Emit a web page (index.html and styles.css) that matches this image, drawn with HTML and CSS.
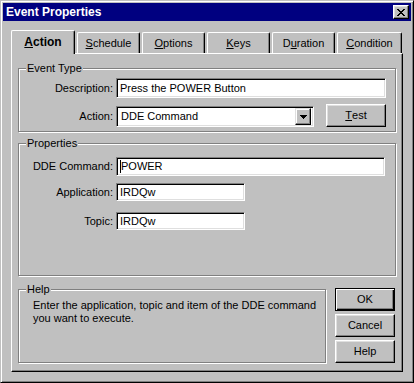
FILE: index.html
```html
<!DOCTYPE html>
<html>
<head>
<meta charset="utf-8">
<link rel="stylesheet" href="styles.css">
</head>
<body>
<div class="window">
  <div class="titlebar">
    <span class="title">Event Properties</span>
    <span class="close">
      <svg width="8" height="7" viewBox="0 0 8 7" shape-rendering="crispEdges"><path d="M0 0h2v1H0zM6 0h2v1H6zM1 1h2v1H1zM5 1h2v1H5zM2 2h4v1H2zM3 3h2v1H3zM2 4h4v1H2zM1 5h2v1H1zM5 5h2v1H5zM0 6h2v1H0zM6 6h2v1H6z" fill="#000"/></svg>
    </span>
  </div>
  <div class="tabs">
    <div class="tab active"><u>A</u>ction</div>
    <div class="tab"><u>S</u>chedule</div>
    <div class="tab"><u>O</u>ptions</div>
    <div class="tab"><u>K</u>eys</div>
    <div class="tab">D<u>u</u>ration</div>
    <div class="tab wide"><u>C</u>ondition</div>
  </div>
  <div class="panel">
    <div class="group g-event">
      <span class="legend">Event Type</span>
      <div class="row">
        <span class="label">Description:</span>
        <div class="field f-desc">Press the POWER Button</div>
      </div>
      <div class="row row2">
        <span class="label">Action:</span>
        <div class="field combo">
          <span class="combo-text">DDE Command</span>
          <span class="drop"><svg width="7" height="4" viewBox="0 0 7 4" shape-rendering="crispEdges"><path d="M0 0h7v1H0zM1 1h5v1H1zM2 2h3v1H2zM3 3h1v1H3z" fill="#000"/></svg></span>
        </div>
        <div class="btn test"><u>T</u>est</div>
      </div>
    </div>
    <div class="group g-props">
      <span class="legend">Properties</span>
      <div class="row">
        <span class="label">DDE Command:</span>
        <div class="field f-dde"><span class="caret"></span>POWER</div>
      </div>
      <div class="row r-app">
        <span class="label">Application:</span>
        <div class="field f-short">IRDQw</div>
      </div>
      <div class="row r-topic">
        <span class="label">Topic:</span>
        <div class="field f-short">IRDQw</div>
      </div>
    </div>
    <div class="bottom">
      <div class="group g-help">
        <span class="legend">Help</span>
        <p class="helptext">Enter the application, topic and item of the DDE command you want to execute.</p>
      </div>
      <div class="buttons">
        <div class="btn default">OK</div>
        <div class="btn">Cancel</div>
        <div class="btn">Help</div>
      </div>
    </div>
  </div>
</div>
</body>
</html>
```
FILE: styles.css
```css
* { box-sizing: border-box; }
html, body { margin: 0; padding: 0; background: #c0c0c0; }
body {
  font-family: "Liberation Sans", Arial, sans-serif;
  font-size: 11px;
  color: #000;
}
.window {
  width: 414px;
  height: 383px;
  background: #c0c0c0;
  border: 1px solid;
  border-color: #c0c0c0 #000 #000 #c0c0c0;
  box-shadow: inset 1px 1px #fff, inset -1px -1px #808080;
  padding: 2px;
}
.titlebar {
  height: 18px;
  background: #000080;
  color: #fff;
  display: flex;
  align-items: center;
  justify-content: space-between;
  padding: 0 2px 0 3px;
}
.title { font-weight: bold; font-size: 12px; line-height: 14px; }
.close {
  width: 16px;
  height: 14px;
  background: #c0c0c0;
  border: 1px solid;
  border-color: #fff #000 #000 #fff;
  box-shadow: inset -1px -1px #808080, inset 1px 1px #dfdfdf;
  display: flex;
  align-items: center;
  justify-content: center;
}
.close svg { display: block; }
.tabs {
  display: flex;
  align-items: flex-end;
  gap: 2px;
  margin: 9px 0 0 8px;
  height: 23px;
}
.tab {
  width: 63px;
  height: 21px;
  border-top: 1px solid #fff;
  border-left: 1px solid #fff;
  border-right: 1px solid #000;
  border-radius: 2px 2px 0 0;
  box-shadow: inset -1px 0 #808080;
  display: flex;
  align-items: center;
  justify-content: center;
  line-height: 13px;
  padding-top: 1px;
}
.tab.active {
  width: 64px;
  height: 24px;
  margin-bottom: -1px;
  position: relative;
  z-index: 1;
  background: #c0c0c0;
  font-weight: bold;
  font-size: 12px;
  padding-top: 0;
}
.tab.wide { width: 65px; }
.panel {
  width: 392px;
  height: 319px;
  margin-left: 8px;
  border-top: 1px solid #fff;
  border-left: 1px solid #fff;
  border-right: 1px solid #000;
  border-bottom: 1px solid #000;
  box-shadow: inset -1px -1px #808080;
  padding: 14px 0 0 6px;
}
.group {
  position: relative;
  border: 1px solid #808080;
  box-shadow: inset 1px 1px #fff, 1px 1px #fff;
}
.legend {
  position: absolute;
  top: -7px;
  left: 7px;
  padding: 0 1px;
  background: #c0c0c0;
  line-height: 13px;
}
.g-event { width: 378px; height: 64px; padding-top: 9px; }
.g-props { width: 378px; height: 133px; margin-top: 11px; padding-top: 13px; }
.row { display: flex; align-items: center; }
.row2 { margin-top: 6px; align-items: flex-end; }
.row2 .label { align-self: center; padding-top: 2px; }
.label {
  width: 94px;
  margin-right: 3px;
  text-align: right;
  line-height: 13px;
  white-space: nowrap;
}
.field {
  background: #fff;
  border: 1px solid;
  border-color: #808080 #fff #fff #808080;
  box-shadow: inset 1px 1px #000, inset -1px -1px #dfdfdf;
  padding-left: 3px;
  display: flex;
  align-items: center;
  line-height: 13px;
  white-space: nowrap;
}
.f-desc { width: 270px; height: 20px; }
.combo {
  width: 198px;
  height: 21px;
  padding: 2px;
  padding-left: 4px;
  justify-content: space-between;
}
.drop {
  width: 16px;
  height: 17px;
  background: #c0c0c0;
  border: 1px solid;
  border-color: #dfdfdf #000 #000 #dfdfdf;
  box-shadow: inset -1px -1px #808080, inset 1px 1px #fff;
  display: flex;
  align-items: center;
  justify-content: center;
}
.drop svg { display: block; }
.btn {
  width: 60px;
  height: 23px;
  background: #c0c0c0;
  border: 1px solid;
  border-color: #fff #000 #000 #fff;
  box-shadow: inset -1px -1px #808080, inset 1px 1px #dfdfdf;
  display: flex;
  align-items: center;
  justify-content: center;
  line-height: 13px;
}
.test { margin-left: 12px; }
.f-dde { width: 269px; height: 19px; }
.r-app { margin-top: 7px; }
.r-topic { margin-top: 11px; }
.f-short { width: 129px; height: 18px; }
.caret { display: inline-block; width: 1px; height: 13px; background: #000; }
.bottom {
  display: flex;
  align-items: flex-start;
  margin-top: 12px;
}
.g-help { width: 308px; height: 74px; margin-top: 1px; padding: 9px 0 0 14px; }
.helptext { margin: 0; line-height: 13px; width: 285px; }
.buttons {
  display: flex;
  flex-direction: column;
  gap: 3px;
  margin-left: 9px;
}
.btn.default {
  border-color: #000;
  box-shadow: inset 1px 1px #fff, inset -1px -1px #000, inset -2px -2px #808080;
}
```
